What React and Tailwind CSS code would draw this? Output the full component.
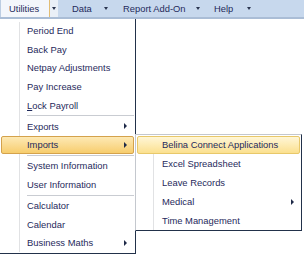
const TXT = "text-[#1f2a5c]";

function DownArrow() {
  return <div className="w-0 h-0 border-x-[2.5px] border-x-transparent border-t-[3px] border-t-[#2b3550]" />;
}
function RightArrow() {
  return <div className="w-0 h-0 border-y-[3px] border-y-transparent border-l-[3px] border-l-[#1f2a48]" />;
}

const mainItems = [
  { t: "Period End" },
  { t: "Back Pay" },
  { t: "Netpay Adjustments" },
  { t: "Pay Increase" },
  { t: "Lock Payroll", u: true },
  { sep: true },
  { t: "Exports", arrow: true },
  { t: "Imports", arrow: true, active: true },
  { sep: true },
  { t: "System Information" },
  { t: "User Information" },
  { sep: true },
  { t: "Calculator" },
  { t: "Calendar" },
  { t: "Business Maths", arrow: true },
];

const subItems = [
  { t: "Belina Connect Applications", active: true },
  { t: "Excel Spreadsheet" },
  { t: "Leave Records" },
  { t: "Medical", arrow: true },
  { t: "Time Management" },
];

function MainRow({ item }) {
  if (item.sep) {
    return (
      <div className="flex h-[2.5px]">
        <div className="w-[20px] border-r border-[#e1e2e4]" />
        <div className="flex-1 ml-[7px] mr-[1px] flex items-center">
          <div className="w-full h-px bg-[#c9ccd2]" />
        </div>
      </div>
    );
  }
  if (item.active) {
    return (
      <div className="h-[18.6px] px-[1px] flex">
        <div className="flex-1 flex items-center rounded-[2px] border border-[#d4a24c] bg-gradient-to-b from-[#fde9b4] to-[#f7cd6c]">
          <span className={`ml-[25px] ${TXT}`}>{item.t}</span>
          <div className="ml-auto mr-[6px]"><RightArrow /></div>
        </div>
      </div>
    );
  }
  return (
    <div className="h-[18.6px] flex">
      <div className="w-[20px] border-r border-[#e1e2e4]" />
      <div className="flex-1 flex items-center">
        <span className={`ml-[7px] ${TXT}`}>
          {item.u ? (<><span className="underline underline-offset-1">L</span>ock Payroll</>) : item.t}
        </span>
        {item.arrow && <div className="ml-auto mr-[8px]"><RightArrow /></div>}
      </div>
    </div>
  );
}

function SubRow({ item }) {
  if (item.active) {
    return (
      <div className="h-[18.9px] px-[1px] flex">
        <div className="flex-1 flex items-center rounded-[2px] border border-[#e8c86a] bg-gradient-to-b from-[#fff6d6] to-[#fbe08e]">
          <span className={`ml-[24px] ${TXT}`}>{item.t}</span>
        </div>
      </div>
    );
  }
  return (
    <div className="h-[18.9px] flex">
      <div className="w-[18px] border-r border-[#e1e2e4]" />
      <div className="flex-1 flex items-center">
        <span className={`ml-[8px] ${TXT}`}>{item.t}</span>
        {item.arrow && <div className="ml-auto mr-[7px]"><RightArrow /></div>}
      </div>
    </div>
  );
}

export default function App() {
  return (
    <div className="relative w-[304px] h-[255px] bg-white overflow-hidden font-['Liberation_Sans',Arial,sans-serif] text-[9.4px] leading-none">
      {/* top bar */}
      <div className="flex h-[19px] bg-[#c7d8ed] border-b-2 border-[#aabdd6]">
        <div className="w-[49px] flex items-center bg-[#f3f6fb] border-l border-[#bccde2]">
          <span className={`ml-[8px] ${TXT}`}>Utilities</span>
        </div>
        <div className="w-px bg-[#e2bd74]" />
        <div className="w-[8px] flex items-center justify-center bg-[#e9eff7]"><DownArrow /></div>
        <div className="w-[39px] flex items-center">
          <span className={`ml-[14px] ${TXT}`}>Data</span>
        </div>
        <div className="w-[17px] flex items-center justify-center"><DownArrow /></div>
        <div className="w-[76px] flex items-center">
          <span className={`ml-[9px] ${TXT}`}>Report Add-On</span>
        </div>
        <div className="w-[16px] flex items-center justify-center"><DownArrow /></div>
        <div className="w-[35px] flex items-center">
          <span className={`ml-[8px] ${TXT}`}>Help</span>
        </div>
        <div className="w-[16px] flex items-center justify-center"><DownArrow /></div>
      </div>

      {/* main dropdown */}
      <div className="absolute left-0 top-[19px] w-[136px] h-[235px] bg-white border-r border-b border-[#22314a] pt-[2.7px]">
        {mainItems.map((it, i) => <MainRow key={i} item={it} />)}
      </div>

      {/* submenu */}
      <div className="absolute left-[135px] top-[134px] w-[167px] h-[97px] bg-white border border-[#c4c8ce] border-r-[#22314a] border-b-[#22314a] pt-[0.5px]">
        {subItems.map((it, i) => <SubRow key={i} item={it} />)}
      </div>
    </div>
  );
}
